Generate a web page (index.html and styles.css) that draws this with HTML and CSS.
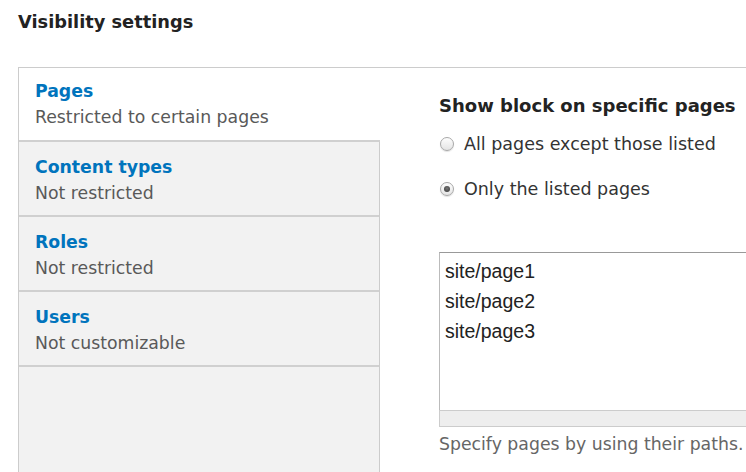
FILE: index.html
```html
<!DOCTYPE html>
<html lang="en">
<head>
<meta charset="utf-8">
<title>Visibility settings</title>
<link rel="stylesheet" href="styles.css">
</head>
<body>
<div class="page">
  <h2 class="title">Visibility settings</h2>
  <div class="vtabs">
    <ul class="tablist">
      <li class="tab is-selected">
        <a class="tab-title" href="#">Pages</a>
        <span class="tab-summary">Restricted to certain pages</span>
      </li>
      <li class="tab">
        <a class="tab-title" href="#">Content types</a>
        <span class="tab-summary">Not restricted</span>
      </li>
      <li class="tab">
        <a class="tab-title" href="#">Roles</a>
        <span class="tab-summary">Not restricted</span>
      </li>
      <li class="tab">
        <a class="tab-title" href="#">Users</a>
        <span class="tab-summary">Not customizable</span>
      </li>
    </ul>
    <div class="pane">
      <div class="pane-heading">Show block on specific pages</div>
      <div class="radios">
        <label class="radio-row"><input type="radio" name="vis" class="radio"> All pages except those listed</label>
        <label class="radio-row"><input type="radio" name="vis" class="radio" checked> Only the listed pages</label>
      </div>
      <div class="textarea-wrap">
        <textarea class="paths" rows="5">site/page1
site/page2
site/page3</textarea>
        <div class="grippie"></div>
      </div>
      <div class="description">Specify pages by using their paths.</div>
    </div>
  </div>
</div>
</body>
</html>
```

FILE: styles.css
```css
html, body {
  margin: 0;
  padding: 0;
  background: #fff;
  overflow: hidden;
}
body {
  width: 746px;
  height: 472px;
  font-family: "DejaVu Sans", "Open Sans", sans-serif;
  font-size: 17.3px;
  color: #333;
}
.page {
  padding: 8px 0 0 18px;
}
.title {
  margin: 0;
  font-size: 17.8px;
  font-weight: bold;
  color: #222;
  line-height: 27px;
}
.vtabs {
  margin-top: 32px;
  display: flex;
  border-top: 1px solid #ccc;
  border-left: 1px solid #ccc;
  height: 420px;
}
.tablist {
  list-style: none;
  margin: 0;
  padding: 0;
  width: 360px;
  flex: none;
  background: #f2f2f2;
  border-right: 1px solid #ccc;
}
.tab {
  box-sizing: border-box;
  display: flex;
  flex-direction: column;
  padding: 13px 16px 0 16px;
  height: 75px;
  border-bottom: 2px solid #d0d0d0;
}
.tab.is-selected {
  background: #fff;
  margin-right: -1px;
  position: relative;
  height: 74px;
  padding-top: 11px;
}
.tab-title {
  color: #0074bd;
  font-weight: bold;
  text-decoration: none;
  line-height: 24px;
}
.tab-summary {
  color: #595959;
  line-height: 28px;
  white-space: nowrap;
}
.pane {
  flex: 1;
  padding: 23px 0 0 59px;
  background: #fff;
  min-width: 0;
}
.pane-heading {
  font-size: 18px;
  font-weight: bold;
  color: #222;
  line-height: 30px;
  white-space: nowrap;
}
.radios {
  display: flex;
  flex-direction: column;
  gap: 23px;
  margin-top: 12px;
}
.radio-row {
  display: flex;
  align-items: center;
  gap: 10px;
  height: 22px;
  color: #333;
  white-space: nowrap;
  font-size: 17.5px;
}
.radio {
  appearance: none;
  -webkit-appearance: none;
  margin: 0 0 0 1px;
  width: 14px;
  height: 14px;
  border-radius: 50%;
  border: 1px solid #a8a8a8;
  background: linear-gradient(#fdfdfd, #e4e4e4);
  box-shadow: 0 1px 1px rgba(0,0,0,0.12);
  display: grid;
  place-items: center;
}
.radio:checked::before {
  content: "";
  width: 6px;
  height: 6px;
  border-radius: 50%;
  background: radial-gradient(circle at 50% 40%, #777, #333);
}
.textarea-wrap {
  margin-top: 52px;
  width: 330px;
}
.paths {
  display: block;
  box-sizing: border-box;
  width: 100%;
  height: 158px;
  margin: 0;
  padding: 3px 5px;
  border: 1px solid #bbb;
  border-top-color: #999;
  border-bottom: none;
  font-family: "Liberation Sans", Arial, sans-serif;
  font-size: 19.5px;
  line-height: 30px;
  color: #222;
  resize: none;
  outline: none;
}
.grippie {
  height: 15px;
  background: #eee;
  border: 1px solid #ccc;
}
.description {
  margin-top: 6px;
  color: #666;
  white-space: nowrap;
  line-height: 22px;
}
```
